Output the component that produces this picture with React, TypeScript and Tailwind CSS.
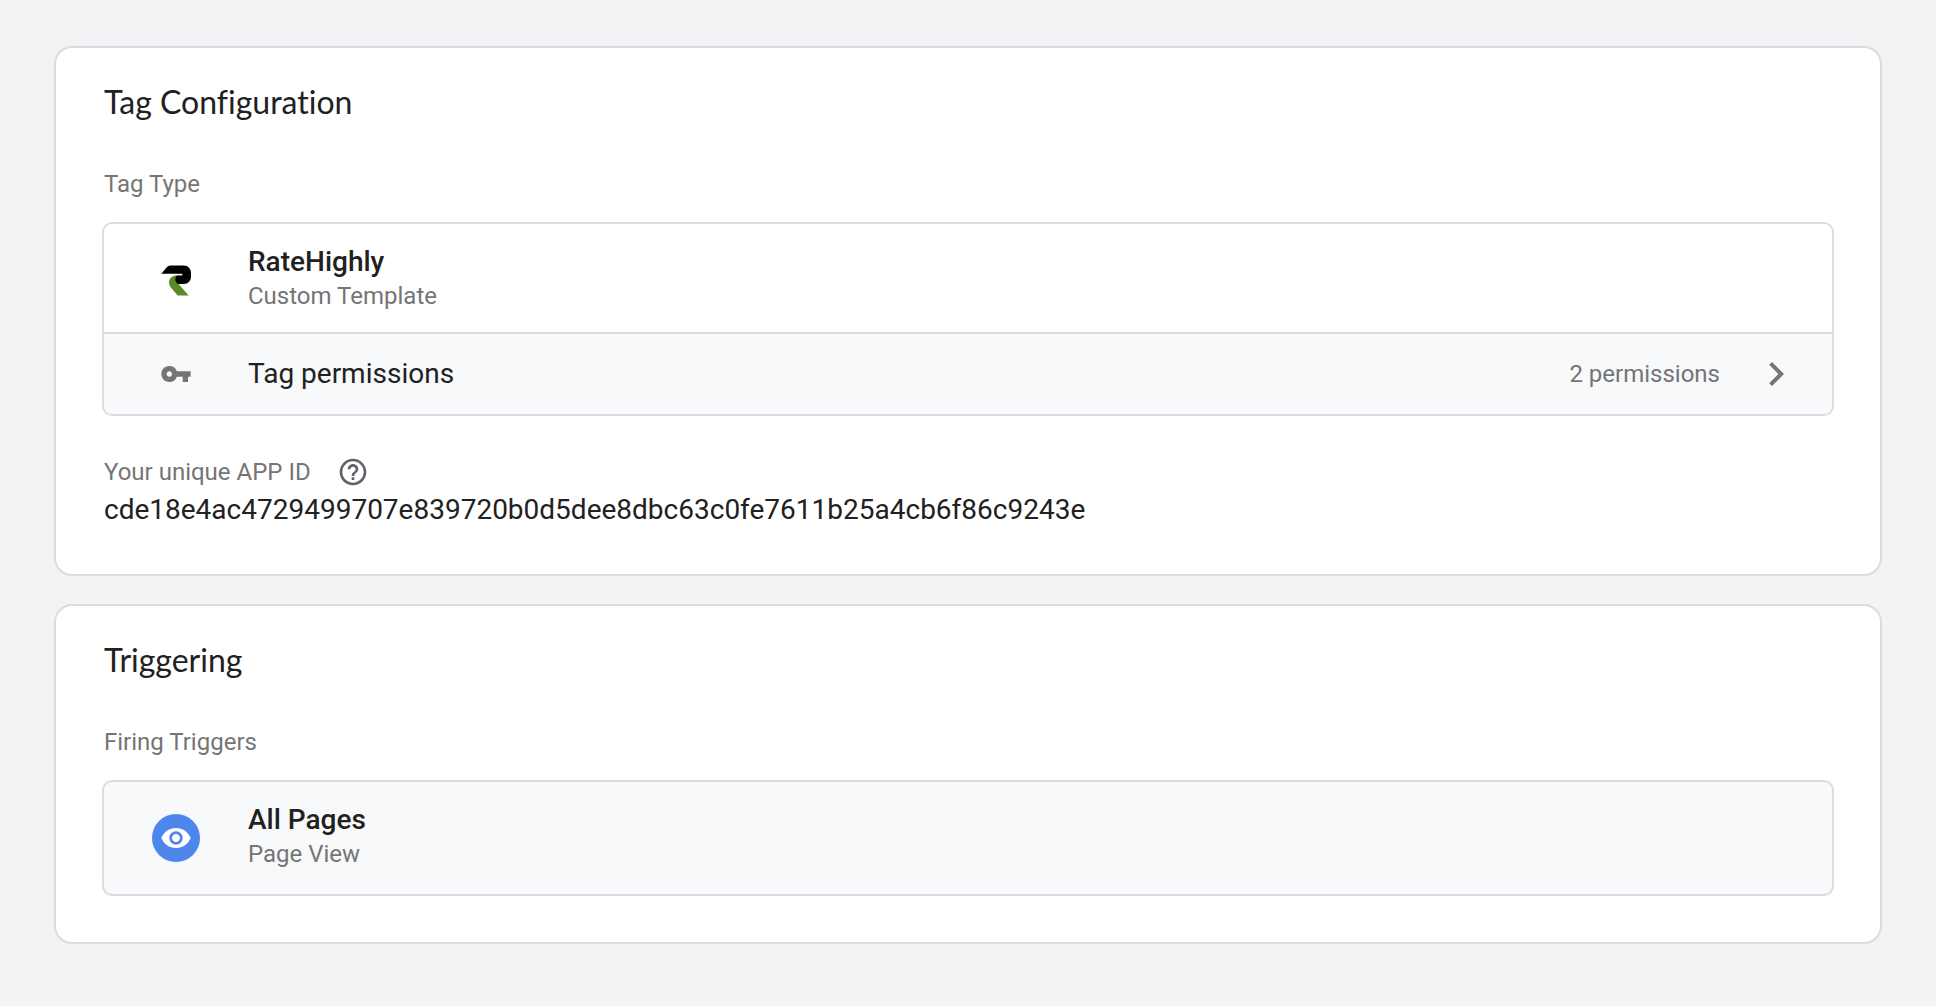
import type { ReactNode } from "react";
import { MdChevronRight, MdHelpOutline, MdVisibility, MdVpnKey } from "react-icons/md";

const APP_ID = "cde18e4ac4729499707e839720b0d5dee8dbc63c0fe7611b25a4cb6f86c9243e";

function RateHighlyLogo() {
  return (
    <svg viewBox="0 0 32 32" className="w-8 h-8" aria-hidden="true">
      <path d="M20 11.300H17C11.500 11.600 9 15 9 18.500C9 20.500 9.800 22.300 11 23.800L17.800 31.600H28.700L18.500 20L17 13Z" fill="#5a8a24" />
      <path d="M1.300 9.700L7 3Q8.200 1.500 10.200 1.500H23.500C28.300 1.500 31 4.800 31 9V12.300C31 17 28.200 20 23.500 20H19.500C17 20 15.300 17.600 15.300 15.200C15.300 12.800 16.600 11.400 18.800 11.400H22.300V9.700Z" fill="#000" />
    </svg>
  );
}

function Card({ title, children }: { title: string; children: ReactNode }) {
  return (
    <section className="bg-white border-2 border-[#dadce0] rounded-[18px] px-[46px] pt-[34px] pb-[46px]">
      <h2 className="font-['Lato',sans-serif] [font-variant-ligatures:none] text-[32px] leading-10 mb-[46px] px-0.5">{title}</h2>
      {children}
    </section>
  );
}

function Label({ children }: { children: ReactNode }) {
  return <h3 className="text-2xl leading-8 text-[#757575] px-0.5">{children}</h3>;
}

function Item({ icon, name, kind }: { icon: ReactNode; name: string; kind: string }) {
  return (
    <div className="flex items-start gap-12 px-12">
      <div className="w-12 h-[72px] shrink-0 flex items-center justify-center">{icon}</div>
      <div>
        <div className="text-[28px] leading-9 font-medium">{name}</div>
        <div className="text-2xl leading-8 text-[#757575]">{kind}</div>
      </div>
    </div>
  );
}

export default function App() {
  return (
    <main className="min-h-screen bg-[#f1f3f4] px-[54px] py-[46px] flex flex-col gap-7 font-['Roboto',sans-serif] text-[#212121]">
      <Card title="Tag Configuration">
        <Label>Tag Type</Label>
        <div className="mt-[22px] border-2 border-[#dadce0] rounded-[10px] overflow-hidden">
          <div className="pt-5 pb-4">
            <Item icon={<RateHighlyLogo />} name="RateHighly" kind="Custom Template" />
          </div>
          <button type="button" className="w-full h-[82px] flex items-center pl-12 pr-8 bg-[#f8f9fb] border-t-2 border-[#dadce0] text-left">
            <span className="w-12 mr-12 flex justify-center text-[#757575]">
              <MdVpnKey size={32} />
            </span>
            <span className="text-[28px] leading-9">Tag permissions</span>
            <span className="ml-auto mr-8 text-2xl leading-8 text-[#757575]">2 permissions</span>
            <MdChevronRight size={48} className="text-[#757575]" />
          </button>
        </div>

        <div className="mt-10 flex items-center gap-6">
          <Label>Your unique APP ID</Label>
          <button type="button" aria-label="Help" className="text-[#5f6368]">
            <MdHelpOutline size={32} />
          </button>
        </div>
        <p className="mt-1 text-[28px] leading-9 px-0.5 break-all">{APP_ID}</p>
      </Card>

      <Card title="Triggering">
        <Label>Firing Triggers</Label>
        <div className="mt-[22px] border-2 border-[#dadce0] rounded-[10px] bg-[#f8f9fb] py-5">
          <Item
            icon={
              <span className="w-12 h-12 rounded-full bg-[#4f86ec] text-white flex items-center justify-center">
                <MdVisibility size={32} />
              </span>
            }
            name="All Pages"
            kind="Page View"
          />
        </div>
      </Card>
    </main>
  );
}
